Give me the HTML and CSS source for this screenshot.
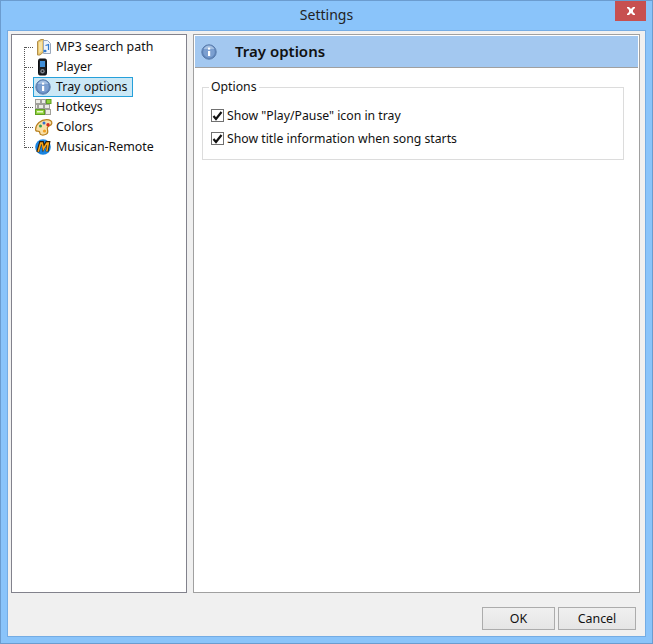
FILE: index.html
```html
<!DOCTYPE html>
<html lang="en">
<head>
<meta charset="utf-8">
<title>Settings</title>
<link rel="stylesheet" href="styles.css">
</head>
<body>
<div class="window">
  <header class="titlebar">
    <span class="title">Settings</span>
    <button class="close" aria-label="Close">
      <svg width="10" height="8" viewBox="0 0 10 8"><path d="M1 0h2l2 2 2-2h2v1L7 3v2l2 2v1H7L5 6 3 8H1V7l2-2V3L1 1z" fill="#fff"/></svg>
    </button>
  </header>
  <div class="client">
    <div class="main">
      <nav class="tree">
        <ul class="tree-list">
          <li class="node"><span class="dash"></span>
            <svg class="icon" width="18" height="18" viewBox="0 0 18 18"><path d="M2.500 3.500L6 1.500h2.500V14L5 17H2.500z" fill="#e9c66e" stroke="#b08e4c"/><path d="M8.500 2.500h4l3 3v10h-7z" fill="#eef4fb" stroke="#9aa8bc"/><path d="M4 4.500L7 3v10l-3 2z" fill="#f6e2a6"/><path d="M10.500 7.500l3-1v5.500" fill="none" stroke="#2f78cc" stroke-width="1.200"/><ellipse cx="10" cy="13" rx="1.600" ry="1.300" fill="#2f78cc"/></svg>
            <span class="label">MP3 search path</span></li>
          <li class="node"><span class="dash"></span>
            <svg class="icon" width="18" height="18" viewBox="0 0 18 18"><rect x="3.500" y="1" width="8" height="16" rx="1.500" fill="#1b1f25" stroke="#0b0d10"/><rect x="5" y="3" width="5" height="6" fill="#3f8ed8"/><circle cx="7.500" cy="13.200" r="2.200" fill="#7f868f"/><circle cx="7.500" cy="13.200" r="0.900" fill="#1b1f25"/></svg>
            <span class="label">Player</span></li>
          <li class="node"><span class="dash"></span>
            <span class="selected">
              <svg class="icon" width="18" height="16" viewBox="0 0 18 16"><circle cx="8" cy="8" r="7.200" fill="#5f86bb" stroke="#5a7cac"/><circle cx="8" cy="8" r="5.800" fill="#7b9fd0"/><path d="M8 1.500a6.500 6.500 0 0 1 5.500 3.500H2.500A6.500 6.500 0 0 1 8 1.500z" fill="#a3bfe2"/><rect x="7" y="7" width="2.200" height="5" fill="#fff"/><rect x="7" y="3.600" width="2.200" height="2" fill="#fff"/></svg>
              <span class="label">Tray options</span>
            </span></li>
          <li class="node"><span class="dash"></span>
            <svg class="icon" width="18" height="16" viewBox="0 0 18 16"><g stroke="#a0a09a" fill="#ecece6"><rect x="0.500" y="0.500" width="5" height="4"/><rect x="6.500" y="0.500" width="4" height="4"/><rect x="3.500" y="5.500" width="5" height="4"/><rect x="9.500" y="5.500" width="5" height="4"/><rect x="0.500" y="5.500" width="2" height="4"/><rect x="10.500" y="10.500" width="5" height="5"/></g><rect x="11.500" y="0.500" width="4.500" height="4" fill="#8fd03c" stroke="#5f9f22"/><rect x="0.500" y="10.500" width="9" height="5" fill="#8fd03c" stroke="#5f9f22"/><rect x="2" y="12" width="6" height="1.500" fill="#eafad0"/></svg>
            <span class="label">Hotkeys</span></li>
          <li class="node"><span class="dash"></span>
            <svg class="icon" width="18" height="17" viewBox="0 0 18 17"><path d="M0.600 10.500C0.600 5 6 .7 11.500 .7c3.800 0 5.800 1.800 5.300 3.800-.5 2.200-3.300 2.200-4.300 3.900S14.500 13 11.500 15c-3 1.700-6.700 1.300-6.700-1 0-1.500-1-1.800-2.500-1.800C1 12.200 .6 11.700 .6 10.500z" fill="#f8dfa8" stroke="#b8801f" stroke-width="1.200"/><circle cx="5.500" cy="7" r="1.500" fill="#3aa04a"/><circle cx="9" cy="4" r="1.500" fill="#3070d0"/><circle cx="13" cy="5.800" r="1.700" fill="#d82a20"/><circle cx="9.500" cy="12" r="1.600" fill="#f0a020"/></svg>
            <span class="label">Colors</span></li>
          <li class="node"><span class="dash"></span>
            <svg class="icon" width="18" height="16" viewBox="0 0 18 16"><circle cx="8" cy="8" r="7.800" fill="#1a84e0"/><path d="M2.800 13.200L5.500 3.500h2l1 5.500 3.200-5.500h2L12 12.500" fill="none" stroke="#2a1a08" stroke-width="3"/><path d="M3.200 12.800L5.800 4h1.400l1.200 6 3.500-6h1.400L11.800 12.300" fill="none" stroke="#f7a61c" stroke-width="1.600"/></svg>
            <span class="label">Musican-Remote</span></li>
        </ul>
      </nav>
      <section class="panel">
        <div class="panel-head">
          <svg class="head-icon" width="16" height="16" viewBox="0 0 16 16"><circle cx="8" cy="8" r="7.200" fill="#5f86bb" stroke="#5a7cac"/><circle cx="8" cy="8" r="5.800" fill="#7b9fd0"/><path d="M8 1.500a6.500 6.500 0 0 1 5.500 3.500H2.500A6.500 6.500 0 0 1 8 1.500z" fill="#a3bfe2"/><rect x="7" y="7" width="2.200" height="5" fill="#fff"/><rect x="7" y="3.600" width="2.200" height="2" fill="#fff"/></svg>
          <h1 class="panel-title">Tray options</h1>
        </div>
        <fieldset class="group">
          <legend class="legend">Options</legend>
          <label class="check"><span class="box"><svg width="11" height="10" viewBox="0 0 11 10"><path d="M1.500 5L4 8 9.500 1" fill="none" stroke="#111" stroke-width="2.200"/></svg></span>Show "Play/Pause" icon in tray</label>
          <label class="check"><span class="box"><svg width="11" height="10" viewBox="0 0 11 10"><path d="M1.500 5L4 8 9.500 1" fill="none" stroke="#111" stroke-width="2.200"/></svg></span>Show title information when song starts</label>
          <span class="watermark">SOFTPEDIA</span>
        </fieldset>
      </section>
    </div>
    <footer class="actions">
      <button class="btn btn-ok">OK</button>
      <button class="btn btn-cancel">Cancel</button>
    </footer>
  </div>
</div>
</body>
</html>
```
FILE: styles.css
```css
* { box-sizing: border-box; }
html, body { margin: 0; height: 100%; }
body { font-family: "Noto Sans", "Open Sans", sans-serif; font-size: 12.4px; color: #111; overflow: hidden; }

.window {
  width: 653px; height: 644px;
  background: #8ac4fa;
  border: 1px solid #6b9ccf;
  display: flex; flex-direction: column;
  padding: 0 6px 6px;
}
.titlebar {
  height: 29px; flex: none;
  display: flex; justify-content: center; align-items: center;
  position: relative;
}
.title { font-size: 14px; color: #222; padding-bottom: 3px; }
.close {
  position: absolute; right: 0; top: 0;
  width: 31px; height: 20px;
  background: #c75050; border: 0; padding: 0;
  display: flex; align-items: center; justify-content: center;
}
.client {
  flex: 1;
  background: #f0f0f0;
  border: 1px solid #74ace4;
  padding: 3px 5px 6px 3px;
  display: flex; flex-direction: column;
}
.main { flex: 1; display: flex; gap: 6px; min-height: 0; }

.tree {
  width: 176px;
  background: #fff;
  border: 1px solid #82828c;
  padding-top: 2px;
}
.tree-list {
  list-style: none; margin: 0; padding: 0;
  position: relative;
}
.tree-list::before {
  content: ""; position: absolute;
  left: 12px; top: 10px; height: 101px;
  border-left: 1px dotted #555;
}
.node { height: 20px; display: flex; align-items: center; padding-left: 13px; }
.dash { width: 8px; flex: none; border-top: 1px dotted #555; }
.icon { flex: none; margin-left: 2px; }
.label { margin-left: 3px; padding-bottom: 2px; white-space: nowrap; }
.selected {
  display: flex; align-items: center;
  height: 20px; width: 100px;
  background: #cbe8f6; border: 1px solid #26a0da;
  padding-left: 1px;
}
.selected .icon { margin-left: 0; }

.panel {
  flex: 1;
  background: #fff;
  border: 1px solid #a0a0a0;
  padding: 1px;
  display: flex; flex-direction: column;
}
.panel-head {
  height: 32px; flex: none;
  background: #a3c8f0;
  border-bottom: 1px solid #a0a0a0;
  display: flex; align-items: center;
  padding-left: 6px;
}
.panel-title { margin: 0 0 2px 18px; font-size: 15px; font-weight: 600; color: #111; }
.head-icon { flex: none; }

.group {
  position: relative;
  margin: 12px 14px 0 7px;
  height: 80px;
  border: 1px solid #dcdcdc;
  padding: 10px 0 0 8px;
  min-width: 0;
}
.legend { padding: 0 2px; margin-left: -2px; font-size: 12.25px; line-height: 14px; }
.check { display: flex; align-items: center; height: 23px; white-space: nowrap; font-size: 12.25px; }
.box {
  width: 13px; height: 13px; flex: none;
  border: 1px solid #707070; background: #fff;
  margin-right: 3px;
  display: flex; align-items: center; justify-content: center;
}
.watermark {
  position: absolute; left: -4px; top: 18px;
  font-size: 25px; font-weight: 700; letter-spacing: 1px;
  color: rgba(0,0,0,0.025);
  pointer-events: none;
}

.actions {
  height: 37px; flex: none;
  display: flex; justify-content: flex-end; align-items: flex-start;
  gap: 3px;
  padding-top: 14px;
  padding-right: 4px;
}
.btn {
  height: 23px;
  background: linear-gradient(#f0f0f0, #e5e5e5);
  border: 1px solid #acacac;
  font: inherit; color: #111;
  padding: 0;
}
.btn-ok { width: 73px; }
.btn-cancel { width: 78px; }
```
